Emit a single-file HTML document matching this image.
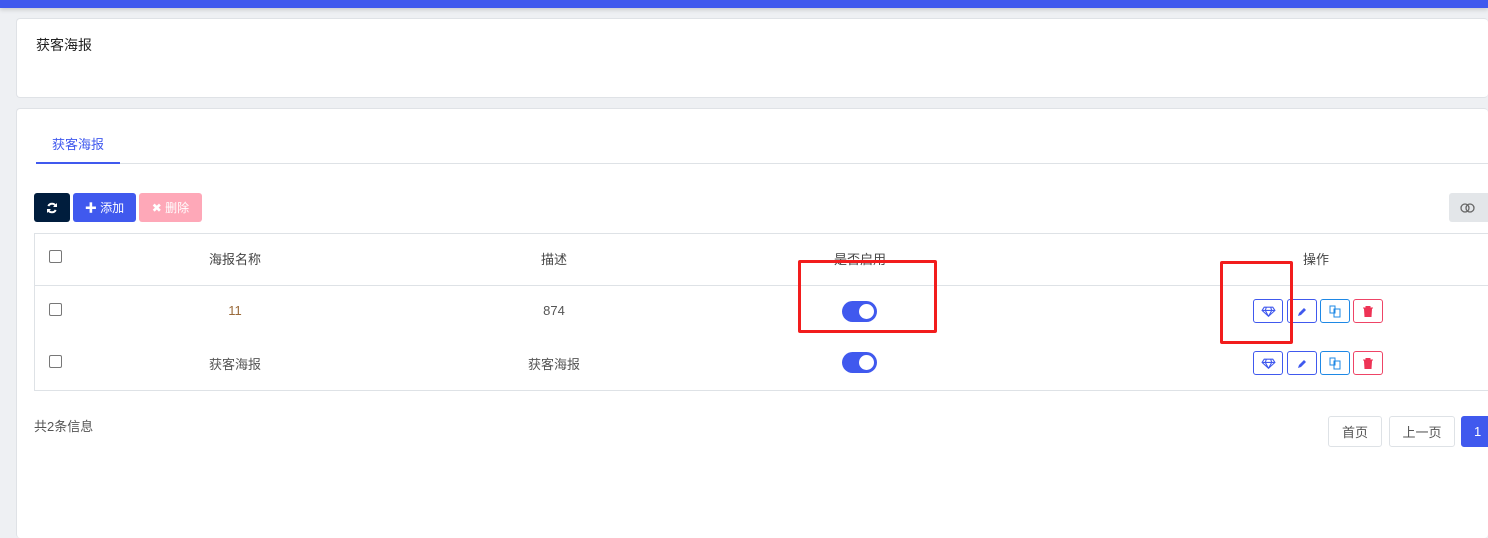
<!DOCTYPE html><html><head><meta charset="utf-8"><style>
*{box-sizing:border-box;margin:0;padding:0}
html,body{width:1488px;height:538px;overflow:hidden}
body{background:#eef0f3;font-family:"Liberation Sans","Noto Sans CJK SC",sans-serif;font-size:13px;color:#555;position:relative}
.a{position:absolute}
.top{left:0;top:0;width:1488px;height:8px;background:#4059ee;box-shadow:0 2px 4px rgba(0,0,0,.15)}
.card{background:#fff;border:1px solid #dfe2e6;border-radius:4px}
.btn{position:absolute;height:29px;border-radius:3px;color:#fff;font-size:12px;display:flex;align-items:center;justify-content:center}
.cb{position:absolute;width:13px;height:13px;border:1px solid #777;border-radius:2px;background:#fff}
.c{position:absolute;transform:translateX(-50%);white-space:nowrap}
.tg{position:absolute;width:35px;height:21px;border-radius:11px;background:#4059ee}
.tg:after{content:"";position:absolute;right:3px;top:3px;width:15px;height:15px;border-radius:50%;background:#fff}
.ib{position:absolute;width:30px;height:24px;border:1px solid;border-radius:3px;display:flex;align-items:center;justify-content:center;background:#fff}
.pg{position:absolute;top:416px;height:31px;border:1px solid #dee2e6;border-radius:3px;background:#fff;display:flex;align-items:center;justify-content:center;color:#555}
.red{position:absolute;border:3px solid #f21d1d;border-radius:2px}
</style></head><body>
<div class="a top"></div>
<div class="a card" style="left:16px;top:18px;width:1472px;height:80px;border-right:none"></div>
<div class="a" style="left:36px;top:35px;font-size:14px;color:#222">获客海报</div>
<div class="a card" style="left:16px;top:108px;width:1472px;height:430px;border-right:none;border-bottom:none"></div>
<div class="a" style="left:52px;top:134px;color:#4059ee">获客海报</div>
<div class="a" style="left:36px;top:163px;width:1452px;height:1px;background:#dee2e6"></div>
<div class="a" style="left:36px;top:162px;width:84px;height:2px;background:#4059ee"></div>
<div class="btn" style="left:34px;top:193px;width:36px;background:#001d3d">
<svg width="12" height="12" viewBox="0 0 12 12"><path d="M10 4.5A4.2 4.2 0 0 0 2.3 4M2 7.5A4.2 4.2 0 0 0 9.7 8" stroke="#fff" stroke-width="2" fill="none"/><path d="M11 1v4H7zM1 11V7h4z" fill="#fff"/></svg></div>
<div class="btn" style="left:73px;top:193px;width:63px;background:#4059ee">✚ 添加</div>
<div class="btn" style="left:139px;top:193px;width:63px;background:#fea8b8">✖ 删除</div>
<div class="btn" style="left:1449px;top:193px;width:39px;background:#e3e6e9;justify-content:flex-start;padding-left:11px;border-radius:3px 0 0 3px"><svg width="16" height="10"><circle cx="5" cy="5" r="4" stroke="#666" fill="none" stroke-width="1.3"/><circle cx="10" cy="5" r="4" stroke="#666" fill="none" stroke-width="1.3"/></svg></div>
<div class="a" style="left:34px;top:233px;width:1454px;height:158px;border:1px solid #dee2e6;border-right:none"></div>
<div class="a" style="left:35px;top:285px;width:1453px;height:1px;background:#dee2e6"></div>
<div class="cb" style="left:49px;top:250px"></div>
<div class="cb" style="left:49px;top:303px"></div>
<div class="cb" style="left:49px;top:355px"></div>
<div class="c" style="left:235px;top:249px;color:#444">海报名称</div>
<div class="c" style="left:554px;top:249px;color:#444">描述</div>
<div class="c" style="left:860px;top:249px;color:#444">是否启用</div>
<div class="c" style="left:1316px;top:249px;color:#444">操作</div>
<div class="c" style="left:235px;top:303px;color:#9a6a3a">11</div>
<div class="c" style="left:554px;top:303px">874</div>
<div class="c" style="left:235px;top:354px">获客海报</div>
<div class="c" style="left:554px;top:354px">获客海报</div>
<div class="tg" style="left:842px;top:301px"></div>
<div class="tg" style="left:842px;top:352px"></div>
<div class="ib" style="left:1253px;top:299px;border-color:#4059ee"><svg width="15" height="11" viewBox="0 0 14 10"><path d="M3 1h8l2 3-6 5.5L1 4zM1 4h12M5 1 4 4l3 5.5L10 4 9 1" stroke="#4059ee" fill="none" stroke-width="1"/></svg></div>
<div class="ib" style="left:1287px;top:299px;border-color:#4059ee"><svg width="11" height="11"><path d="M1 10l1-3 5-5 2 2-5 5z" fill="#4059ee"/></svg></div>
<div class="ib" style="left:1320px;top:299px;border-color:#1e88e5"><svg width="13" height="13"><path d="M1 1h5v7H1zM5 4h6v8H5z" stroke="#1e88e5" fill="#fff"/></svg></div>
<div class="ib" style="left:1353px;top:299px;border-color:#ee4466"><svg width="10" height="11"><path d="M0 2h10M3 2V0h4v2M1.5 3h7l-.5 8h-6z" stroke="#ee3355" fill="#ee3355" stroke-width="1"/></svg></div>
<div class="ib" style="left:1253px;top:351px;border-color:#4059ee"><svg width="15" height="11" viewBox="0 0 14 10"><path d="M3 1h8l2 3-6 5.5L1 4zM1 4h12M5 1 4 4l3 5.5L10 4 9 1" stroke="#4059ee" fill="none" stroke-width="1"/></svg></div>
<div class="ib" style="left:1287px;top:351px;border-color:#4059ee"><svg width="11" height="11"><path d="M1 10l1-3 5-5 2 2-5 5z" fill="#4059ee"/></svg></div>
<div class="ib" style="left:1320px;top:351px;border-color:#1e88e5"><svg width="13" height="13"><path d="M1 1h5v7H1zM5 4h6v8H5z" stroke="#1e88e5" fill="#fff"/></svg></div>
<div class="ib" style="left:1353px;top:351px;border-color:#ee4466"><svg width="10" height="11"><path d="M0 2h10M3 2V0h4v2M1.5 3h7l-.5 8h-6z" stroke="#ee3355" fill="#ee3355" stroke-width="1"/></svg></div>
<div class="red" style="left:798px;top:260px;width:139px;height:73px"></div>
<div class="red" style="left:1220px;top:261px;width:73px;height:83px"></div>
<div class="a" style="left:34px;top:416px">共2条信息</div>
<div class="pg" style="left:1328px;width:54px">首页</div>
<div class="pg" style="left:1389px;width:66px">上一页</div>
<div class="pg" style="left:1461px;width:27px;background:#4059ee;border-color:#4059ee;color:#fff;justify-content:flex-start;padding-left:12px;border-radius:3px 0 0 3px">1</div>
</body></html>
